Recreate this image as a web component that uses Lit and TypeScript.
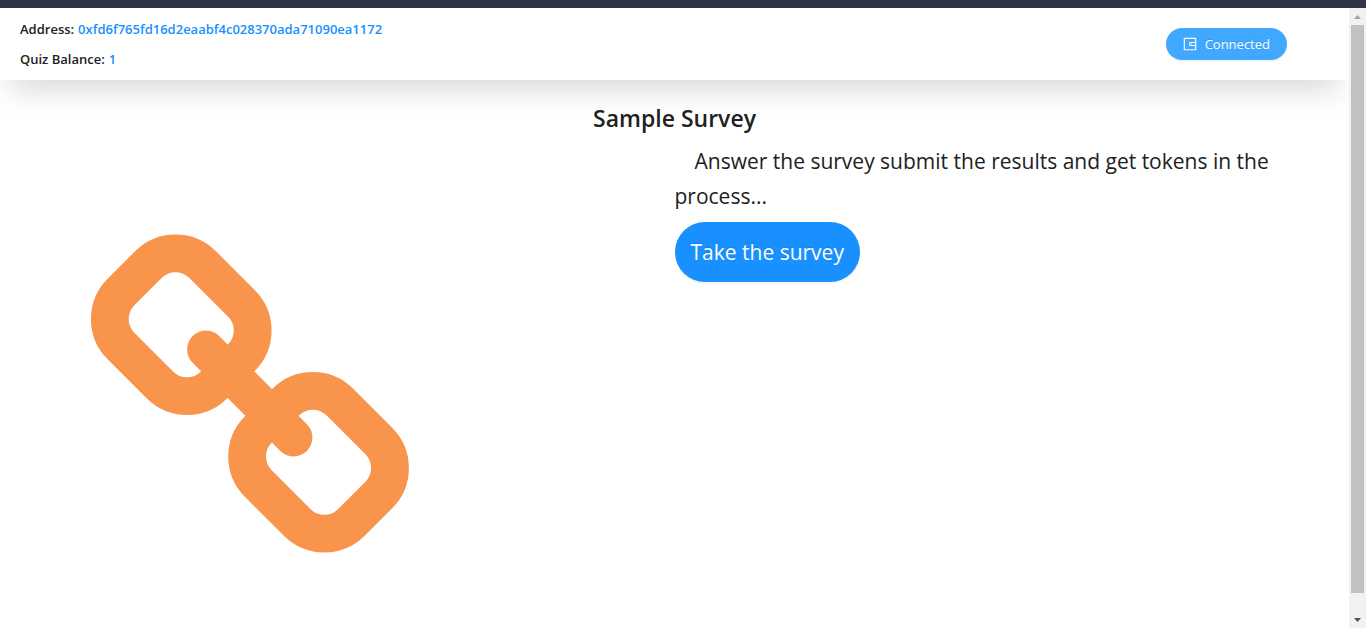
import { LitElement, html, css } from "lit";
import { customElement, property } from "lit/decorators.js";

@customElement("page-scrollbar")
class PageScrollbar extends LitElement {
  static styles = css`
    :host {
      display: flex;
      flex-direction: column;
      flex: none;
      width: 17px;
      background: #f1f1f1;
    }
    .arrow {
      display: block;
      width: 17px;
      height: 17px;
      flex: none;
    }
    .track {
      flex: 1;
      padding: 0 2px;
    }
    .thumb {
      height: 97%;
      background: #c1c1c1;
    }
  `;

  render() {
    return html`
      <svg class="arrow" viewBox="0 0 17 17" aria-hidden="true">
        <path d="M5 11L8.5 7L12 11Z" fill="#a3a3a3" />
      </svg>
      <div class="track"><div class="thumb"></div></div>
      <svg class="arrow" viewBox="0 0 17 17" aria-hidden="true">
        <path d="M5 7L8.5 11L12 7Z" fill="#505050" />
      </svg>
    `;
  }
}

@customElement("account-header")
class AccountHeader extends LitElement {
  @property() address = "";
  @property({ type: Number }) balance = 0;

  static styles = css`
    :host {
      display: flex;
      justify-content: space-between;
      align-items: center;
      height: 72px;
      padding: 0 62px 0 20px;
      box-sizing: border-box;
      background: #fff;
      box-shadow: 0 20px 30px -10px rgba(0, 0, 0, 0.15);
    }
    .account {
      margin: 0;
      font-size: 13px;
      line-height: 30px;
      font-weight: 600;
    }
    .row {
      display: flex;
      gap: 4px;
    }
    dd {
      margin: 0;
      color: #1890ff;
    }
    .wallet {
      display: flex;
      align-items: center;
      gap: 8px;
      height: 32px;
      padding: 0 17px;
      border: 0;
      border-radius: 32px;
      background: #40a9ff;
      color: #fff;
      font: inherit;
      font-size: 13px;
      box-shadow: 0 2px 0 rgba(0, 0, 0, 0.04);
      text-shadow: 0 -1px 0 rgba(0, 0, 0, 0.12);
    }
    .wallet svg {
      width: 14px;
      height: 14px;
    }
  `;

  render() {
    return html`
      <dl class="account">
        <div class="row"><dt>Address:</dt><dd>${this.address}</dd></div>
        <div class="row"><dt>Quiz Balance:</dt><dd>${this.balance}</dd></div>
      </dl>
      <button class="wallet" type="button">
        <svg viewBox="64 64 896 896" fill="currentColor" aria-hidden="true">
          <path d="M880 112H144c-17.7 0-32 14.3-32 32v736c0 17.7 14.3 32 32 32h736c17.7 0 32-14.3 32-32V144c0-17.7-14.3-32-32-32zm-40 464H528V448h312v128zm0 264H184V184h656v200H496c-17.7 0-32 14.3-32 32v192c0 17.7 14.3 32 32 32h344v200zM580 512a40 40 0 1080 0 40 40 0 10-80 0z" />
        </svg>
        <span>Connected</span>
      </button>
    `;
  }
}

@customElement("app-root")
class AppRoot extends LitElement {
  static styles = css`
    :host {
      display: flex;
      flex-direction: column;
      height: 100vh;
      background: #fff;
      color: #212121;
      font-family: "Segoe UI", "Open Sans", "Noto Sans", sans-serif;
    }
    .topbar {
      flex: none;
      height: 8px;
      background: #303443;
    }
    .view {
      flex: 1;
      display: flex;
      min-height: 0;
    }
    .page {
      flex: 1;
      min-width: 0;
      overflow: hidden;
    }
    h1 {
      margin: 20px 0 8px;
      text-align: center;
      font-size: 23px;
      line-height: 36px;
      font-weight: 600;
    }
    .columns {
      display: grid;
      grid-template-columns: 1fr 1fr;
    }
    .art {
      padding: 90px 90px 0;
    }
    .chain {
      display: block;
      width: 320px;
      height: 320px;
    }
    .intro {
      padding-right: 74px;
    }
    p {
      margin: 0 0 8px;
      font-size: 21px;
      line-height: 35px;
      text-indent: 20px;
    }
    .take {
      height: 60px;
      padding: 0 16px;
      border: 0;
      border-radius: 60px;
      background: #1890ff;
      color: #fff;
      font: inherit;
      font-size: 21px;
      box-shadow: 0 2px 0 rgba(0, 0, 0, 0.04);
      text-shadow: 0 -1px 0 rgba(0, 0, 0, 0.12);
    }
  `;

  render() {
    const link =
      "M148.5 264.5A38.2 38.2 0 0 1 202.5 264.5L241.5 303.5A38.2 38.2 0 0 1 241.5 357.5L214 385A38.2 38.2 0 0 1 160 385L121 346A38.2 38.2 0 0 1 121 292Z";
    return html`
      <div class="topbar"></div>
      <div class="view">
        <div class="page">
          <account-header
            address="0xfd6f765fd16d2eaabf4c028370ada71090ea1172"
            balance="1"
          ></account-header>
          <main>
            <h1>Sample Survey</h1>
            <div class="columns">
              <div class="art">
                <svg class="chain" viewBox="90 234 320 320" aria-hidden="true">
                  <g fill="none" stroke="#f9944c" stroke-width="37.8">
                    <path d=${link} />
                    <path d=${link} transform="translate(137.3 137.5)" />
                    <path d="M206 349.5L293.5 437.5" stroke-linecap="round" />
                  </g>
                </svg>
              </div>
              <div class="intro">
                <p>Answer the survey submit the results and get tokens in the process...</p>
                <button class="take" type="button">Take the survey</button>
              </div>
            </div>
          </main>
        </div>
        <page-scrollbar></page-scrollbar>
      </div>
    `;
  }
}
